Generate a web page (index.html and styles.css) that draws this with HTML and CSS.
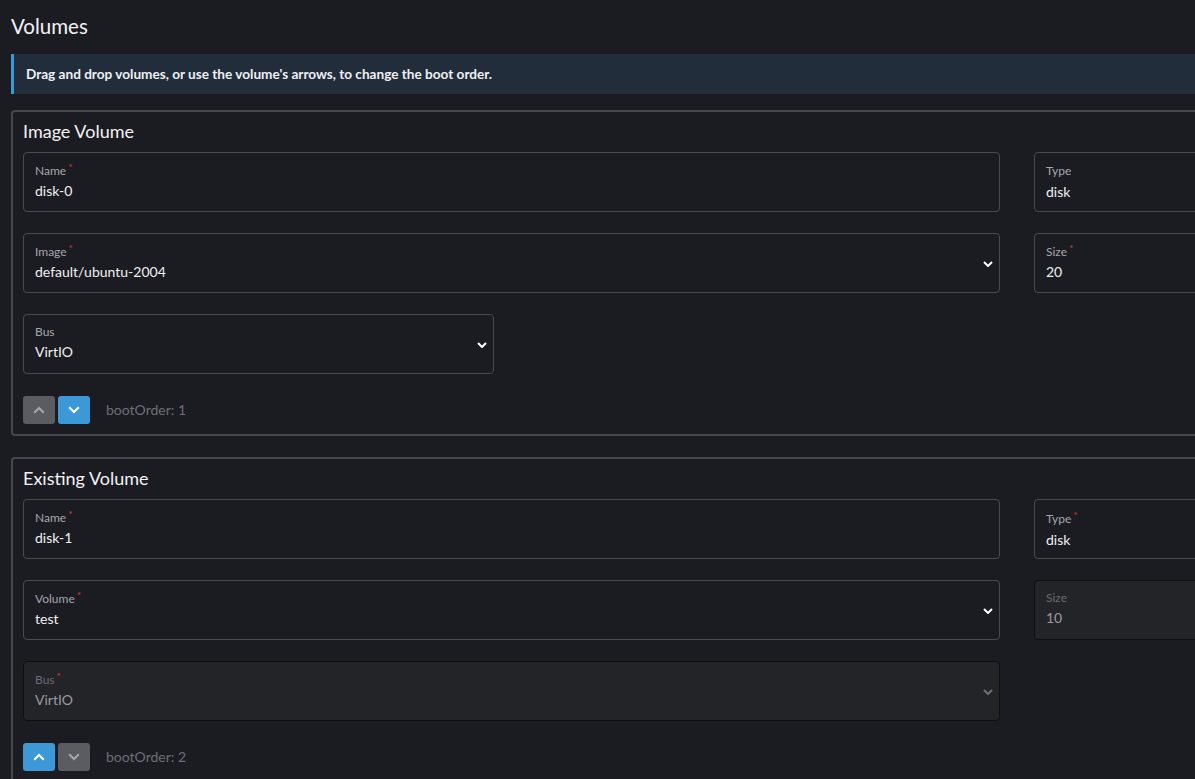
FILE: index.html
```html
<!DOCTYPE html>
<html lang="en">
<head>
<meta charset="utf-8">
<title>Volumes</title>
<link rel="stylesheet" href="styles.css">
</head>
<body>
<div class="page">
  <h2 class="page-title">Volumes</h2>
  <div class="banner">Drag and drop volumes, or use the volume's arrows, to change the boot order.</div>

  <section class="card">
    <h3 class="card-title">Image Volume</h3>
    <div class="grid">
      <div class="field span2">
        <div class="label">Name<span class="req">*</span></div>
        <div class="value">disk-0</div>
      </div>
      <div class="field low">
        <div class="label">Type</div>
        <div class="value">disk</div>
      </div>
      <div class="field select span2">
        <div class="label">Image<span class="req">*</span></div>
        <div class="value">default/ubuntu-2004</div>
        <svg class="chev" viewBox="0 0 10 6" width="10" height="6"><path d="M1 1 L5 5 L9 1" fill="none" stroke="currentColor" stroke-width="2"/></svg>
      </div>
      <div class="field">
        <div class="label">Size<span class="req">*</span></div>
        <div class="value">20</div>
      </div>
      <div class="field select">
        <div class="label">Bus</div>
        <div class="value">VirtIO</div>
        <svg class="chev" viewBox="0 0 10 6" width="10" height="6"><path d="M1 1 L5 5 L9 1" fill="none" stroke="currentColor" stroke-width="2"/></svg>
      </div>
    </div>
    <div class="order">
      <button class="btn btn-off" type="button"><svg viewBox="0 0 12 8" width="12" height="8"><path d="M1.2 6.8 L6 2 L10.8 6.8" fill="none" stroke="currentColor" stroke-width="2"/></svg></button>
      <button class="btn btn-on" type="button"><svg viewBox="0 0 12 8" width="12" height="8"><path d="M1.2 1.2 L6 6 L10.8 1.2" fill="none" stroke="currentColor" stroke-width="2"/></svg></button>
      <span class="order-text">bootOrder: 1</span>
    </div>
  </section>

  <section class="card">
    <h3 class="card-title">Existing Volume</h3>
    <div class="grid">
      <div class="field span2">
        <div class="label">Name<span class="req">*</span></div>
        <div class="value">disk-1</div>
      </div>
      <div class="field low">
        <div class="label">Type<span class="req">*</span></div>
        <div class="value">disk</div>
      </div>
      <div class="field select span2">
        <div class="label">Volume<span class="req">*</span></div>
        <div class="value">test</div>
        <svg class="chev" viewBox="0 0 10 6" width="10" height="6"><path d="M1 1 L5 5 L9 1" fill="none" stroke="currentColor" stroke-width="2"/></svg>
      </div>
      <div class="field disabled">
        <div class="label">Size</div>
        <div class="value">10</div>
      </div>
      <div class="field select disabled span2">
        <div class="label">Bus<span class="req">*</span></div>
        <div class="value">VirtIO</div>
        <svg class="chev" viewBox="0 0 10 6" width="10" height="6"><path d="M1 1 L5 5 L9 1" fill="none" stroke="currentColor" stroke-width="2"/></svg>
      </div>
    </div>
    <div class="order">
      <button class="btn btn-on" type="button"><svg viewBox="0 0 12 8" width="12" height="8"><path d="M1.2 6.8 L6 2 L10.8 6.8" fill="none" stroke="currentColor" stroke-width="2"/></svg></button>
      <button class="btn btn-off" type="button"><svg viewBox="0 0 12 8" width="12" height="8"><path d="M1.2 1.2 L6 6 L10.8 1.2" fill="none" stroke="currentColor" stroke-width="2"/></svg></button>
      <span class="order-text">bootOrder: 2</span>
    </div>
  </section>
</div>
</body>
</html>
```

FILE: styles.css
```css
html, body {
  margin: 0;
  padding: 0;
  background: #1b1c21;
  overflow: hidden;
}

body {
  font-family: Lato, "Noto Sans", "Liberation Sans", sans-serif;
  color: #e9e9ec;
}

.page {
  width: 1530px;
  padding: 14px 0 0 11px;
}

.page-title {
  margin: 0 0 16px;
  font-size: 20.5px;
  line-height: 24px;
  font-weight: 400;
  color: #f2f2f4;
}

.banner {
  box-sizing: border-box;
  height: 40px;
  padding: 10px 12px;
  background: #222d3b;
  border-left: 3px solid #3d98d8;
  font-size: 13.6px;
  line-height: 20px;
  font-weight: 700;
  color: #eef0f3;
  margin-bottom: 16px;
}

.card {
  border: 2px solid #46474c;
  border-radius: 4px;
  padding: 8px 10px 10px;
  margin-bottom: 21px;
}

.card-title {
  margin: 0 0 10px;
  font-size: 18px;
  line-height: 22px;
  font-weight: 400;
  color: #f2f2f4;
}

.grid {
  display: grid;
  grid-template-columns: repeat(3, 471px);
  column-gap: 34.5px;
  row-gap: 21px;
}

.span2 {
  grid-column: span 2;
}

.field {
  position: relative;
  box-sizing: border-box;
  height: 60px;
  padding: 9px 11px 11px;
  border: 1px solid #4a4b51;
  border-radius: 4px;
}

.field.low {
  padding-top: 10px;
}

.field.low .value {
  margin-top: 3px;
}

.label {
  font-size: 12px;
  line-height: 16px;
  color: #a6a7ae;
}

.req {
  color: #e0302f;
  font-size: 10px;
  line-height: 1;
  vertical-align: 4px;
  margin-left: 2px;
}

.value {
  margin-top: 2px;
  font-size: 14px;
  line-height: 20px;
  color: #f0f0f2;
}

.chev {
  position: absolute;
  right: 6px;
  top: 27px;
  color: #ffffff;
}

.field.disabled {
  background: #232427;
  border-color: #0f0f12;
}

.field.disabled .label {
  color: #6a6b75;
}

.field.disabled .value {
  color: #9a9ba0;
}

.field.disabled .chev {
  color: #6f7076;
}

.order {
  display: flex;
  align-items: center;
  margin-top: 22px;
}

.btn {
  display: flex;
  align-items: center;
  justify-content: center;
  width: 32px;
  height: 28px;
  padding: 0;
  margin-right: 3px;
  border: 0;
  border-radius: 3px;
}

.btn-off {
  background: #5b5c61;
  color: #a6a7ab;
}

.btn-on {
  background: #3d98d8;
  color: #ffffff;
}

.order-text {
  margin-left: 13px;
  font-size: 14px;
  line-height: 20px;
  color: #6d6e75;
}
```
